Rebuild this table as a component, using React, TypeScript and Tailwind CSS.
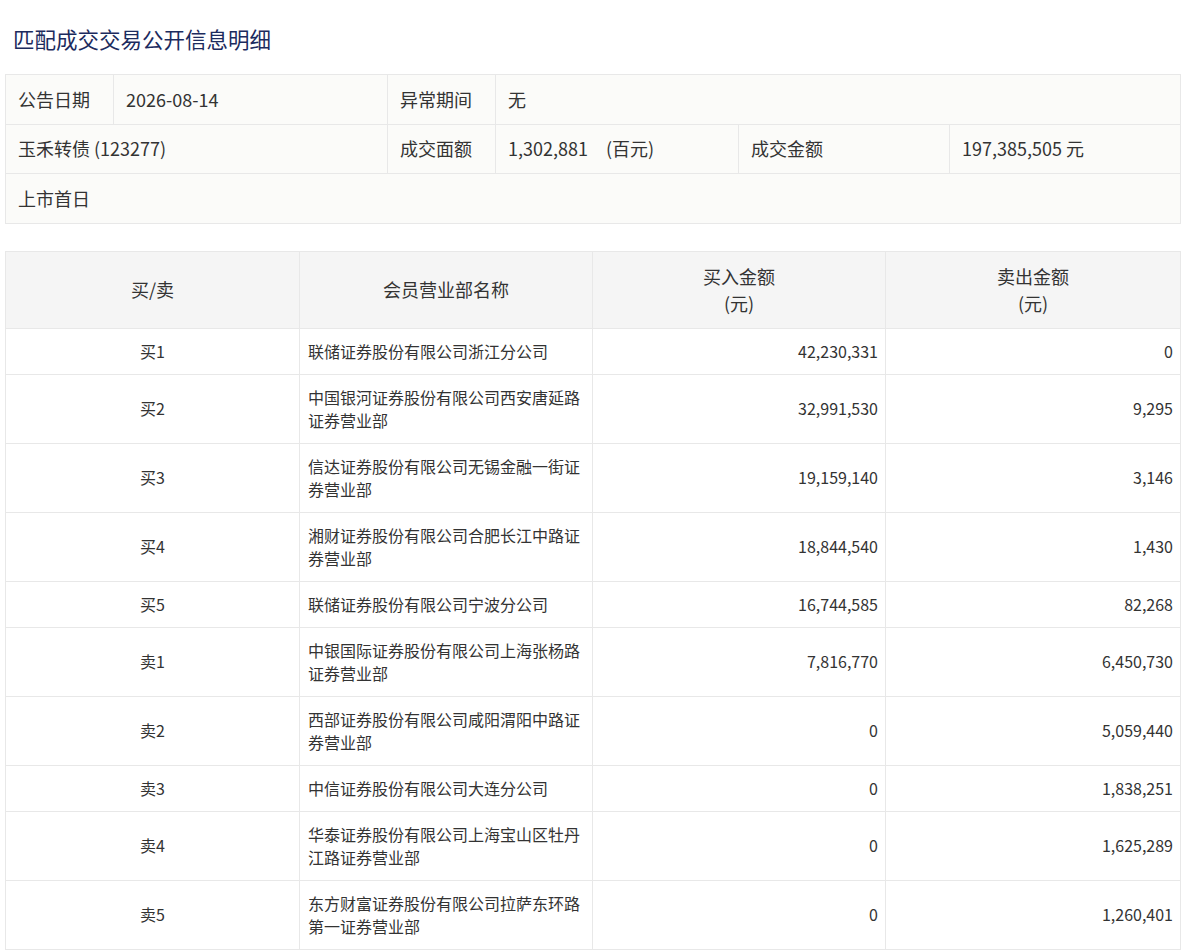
const rows = [
  { side: "买1", name: "联储证券股份有限公司浙江分公司", buy: "42,230,331", sell: "0" },
  { side: "买2", name: "中国银河证券股份有限公司西安唐延路证券营业部", buy: "32,991,530", sell: "9,295" },
  { side: "买3", name: "信达证券股份有限公司无锡金融一街证券营业部", buy: "19,159,140", sell: "3,146" },
  { side: "买4", name: "湘财证券股份有限公司合肥长江中路证券营业部", buy: "18,844,540", sell: "1,430" },
  { side: "买5", name: "联储证券股份有限公司宁波分公司", buy: "16,744,585", sell: "82,268" },
  { side: "卖1", name: "中银国际证券股份有限公司上海张杨路证券营业部", buy: "7,816,770", sell: "6,450,730" },
  { side: "卖2", name: "西部证券股份有限公司咸阳渭阳中路证券营业部", buy: "0", sell: "5,059,440" },
  { side: "卖3", name: "中信证券股份有限公司大连分公司", buy: "0", sell: "1,838,251" },
  { side: "卖4", name: "华泰证券股份有限公司上海宝山区牡丹江路证券营业部", buy: "0", sell: "1,625,289" },
  { side: "卖5", name: "东方财富证券股份有限公司拉萨东环路第一证券营业部", buy: "0", sell: "1,260,401" },
];

const info = "border border-[#e8e8e8] px-3 h-[49.5px] text-left font-normal";

export default function App() {
  return (
    <div
      className="min-h-screen bg-white text-[#333] px-[5px] pb-4"
      style={{ fontFamily: '"Microsoft YaHei", "Noto Sans CJK SC", "Open Sans", sans-serif' }}
    >
      {/* 标题 */}
      <h1 className="pl-2 pt-[24px] pb-[21px] text-[21.5px] leading-[29px] text-[#1c2b5e]">
        匹配成交交易公开信息明细
      </h1>

      {/* 基本信息 */}
      <table className="w-[1175px] table-fixed border-collapse bg-[#fbfbf9] text-[18px]">
        <colgroup>
          <col className="w-[108px]" />
          <col className="w-[274px]" />
          <col className="w-[108px]" />
          <col className="w-[243px]" />
          <col className="w-[211px]" />
          <col className="w-[231px]" />
        </colgroup>
        <tbody>
          <tr>
            <td className={info}>公告日期</td>
            <td className={info}>2026-08-14</td>
            <td className={info}>异常期间</td>
            <td className={info} colSpan={3}>无</td>
          </tr>
          <tr>
            <td className={info} colSpan={2}>玉禾转债 (123277)</td>
            <td className={info}>成交面额</td>
            <td className={info}>1,302,881　(百元)</td>
            <td className={info}>成交金额</td>
            <td className={info}>197,385,505 元</td>
          </tr>
          <tr>
            <td className={info} colSpan={6}>上市首日</td>
          </tr>
        </tbody>
      </table>

      {/* 明细 */}
      <table className="mt-[27px] w-[1175px] table-fixed border-collapse text-[16px] leading-[23px]">
        <colgroup>
          <col className="w-[294px]" />
          <col className="w-[293px]" />
          <col className="w-[293px]" />
          <col className="w-[295px]" />
        </colgroup>
        <thead>
          <tr className="bg-[#f5f5f5] text-[18px] leading-[27px]">
            <th className="border border-[#e8e8e8] h-[77px] font-normal">买/卖</th>
            <th className="border border-[#e8e8e8] font-normal">会员营业部名称</th>
            <th className="border border-[#e8e8e8] font-normal">
              买入金额
              <br />
              (元)
            </th>
            <th className="border border-[#e8e8e8] font-normal">
              卖出金额
              <br />
              (元)
            </th>
          </tr>
        </thead>
        <tbody>
          {rows.map((r) => (
            <tr key={r.side}>
              <td className="border border-[#e8e8e8] py-[11px] text-center">{r.side}</td>
              <td className="border border-[#e8e8e8] py-[11px] px-2 text-left">{r.name}</td>
              <td className="border border-[#e8e8e8] py-[11px] pr-[7px] text-right">{r.buy}</td>
              <td className="border border-[#e8e8e8] py-[11px] pr-[7px] text-right">{r.sell}</td>
            </tr>
          ))}
        </tbody>
      </table>
    </div>
  );
}
